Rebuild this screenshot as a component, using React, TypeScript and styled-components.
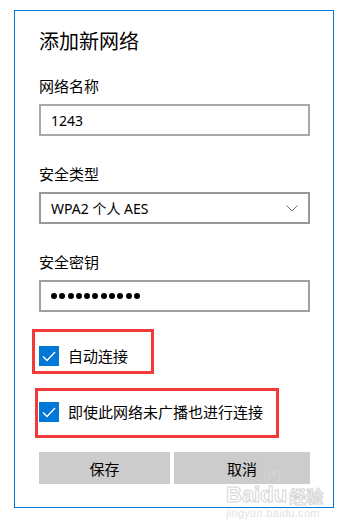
import React from 'react';
import styled, { createGlobalStyle } from 'styled-components';

const GlobalStyle = createGlobalStyle`
body {
  margin: 0;
  background: #fff;
  font-family: "Noto Sans", "Noto Sans CJK SC", sans-serif;
}
`

const Page = styled.div`
position: relative;
width: 345px;
height: 526px;
overflow: hidden;
padding: 10px 0 0 14px;
box-sizing: border-box;
`

const Panel = styled.div`
width: 320px;
border: 1px solid #0078d7;
box-sizing: border-box;
padding: 16px 23px 23px 24px;
display: flex;
flex-direction: column;
`

const Title = styled.div`
font-size: 20px;
line-height: 28px;
color: #000;
font-family: "Noto Sans CJK SC", sans-serif;
`

const Field = styled.div`
display: flex;
flex-direction: column;
gap: 8px;
margin-top: ${(p: { $top: number }) => p.$top}px;
`

const Label = styled.div`
font-size: 15px;
line-height: 20px;
color: #000;
font-family: "Noto Sans CJK SC", sans-serif;
`

const Box = styled.div<{ $border: string }>`
height: 32px;
box-sizing: border-box;
border: 2px solid ${p => p.$border};
display: flex;
align-items: center;
padding: 0 10px;
font-size: 14px;
color: #000;
`

const BoxText = styled.span`
flex: 1;
white-space: nowrap;
`

const Dots = styled.div`
display: flex;
gap: 2.3px;
`

const Dot = styled.span`
width: 6px;
height: 6px;
border-radius: 50%;
background: #000;
`

const Highlight = styled.div<{ $top: number; $left: number; $width: number; $height: number; $padTop: number }>`
margin-top: ${p => p.$top}px;
margin-left: ${p => p.$left}px;
width: ${p => p.$width}px;
height: ${p => p.$height}px;
box-sizing: border-box;
border: 3px solid #f23a3a;
padding-top: ${p => p.$padTop}px;
padding-left: ${p => -p.$left - 3}px;
`

const CheckRow = styled.div`
display: flex;
align-items: center;
gap: 9px;
font-size: 15px;
line-height: 20px;
color: #000;
font-family: "Noto Sans CJK SC", sans-serif;
white-space: nowrap;
`

const CheckBox = styled.span`
width: 20px;
height: 20px;
flex: none;
background: #0078d7;
display: flex;
align-items: center;
justify-content: center;
`

const Buttons = styled.div`
margin-top: 14px;
display: grid;
grid-template-columns: 131px 1fr;
gap: 4px;
`

const Button = styled.div`
height: 32px;
background: #cccccc;
display: flex;
align-items: center;
justify-content: center;
font-size: 15px;
color: #000;
font-family: "Noto Sans CJK SC", sans-serif;
`

const Watermark = styled.div`
position: absolute;
left: 226px;
top: 470px;
display: flex;
flex-direction: column;
align-items: flex-start;
pointer-events: none;
`

const MarkRow = styled.div`
display: flex;
align-items: flex-end;
font-family: "Liberation Sans", sans-serif;
font-weight: bold;
font-size: 22px;
line-height: 22px;
color: rgba(255, 255, 255, 0.7);
-webkit-text-stroke: 1px #d6d6d6;
`

const MarkCjk = styled.span`
font-family: "Noto Sans CJK SC", sans-serif;
font-size: 17px;
line-height: 20px;
margin-left: 2px;
`

const MarkUrl = styled.div`
margin-top: 1px;
font-family: "Liberation Sans", sans-serif;
font-size: 11px;
line-height: 12px;
color: #e2e2e2;
letter-spacing: 0.3px;
`

function Check() {
  return (
    <CheckBox>
      <svg width="14" height="11" viewBox="0 0 14 11">
        <path d="M1 5.5 L5 9.5 L13 1" fill="none" stroke="#fff" strokeWidth="1.5" />
      </svg>
    </CheckBox>
  );
}

function Chevron() {
  return (
    <svg width="12" height="7" viewBox="0 0 12 7">
      <path d="M0.5 0.5 L6 6 L11.5 0.5" fill="none" stroke="#6d6d6d" strokeWidth="1" />
    </svg>
  );
}

function Paw() {
  return (
    <svg width="22" height="16" viewBox="0 0 22 16" style={{ marginBottom: -2 }}>
      <g fill="none" stroke="#d6d6d6" strokeWidth="1">
        <ellipse cx="4" cy="9" rx="2.5" ry="3" />
        <ellipse cx="8.5" cy="4" rx="2.5" ry="3" />
        <ellipse cx="14" cy="4" rx="2.5" ry="3" />
        <ellipse cx="18.5" cy="9" rx="2.5" ry="3" />
      </g>
    </svg>
  );
}

function App() {
  return (
    <Page>
      <GlobalStyle />
      <Panel>
        <Title>添加新网络</Title>

        <Field $top={21}>
          <Label>网络名称</Label>
          <Box $border="#a8a8a8"><BoxText>1243</BoxText></Box>
        </Field>

        <Field $top={28}>
          <Label>安全类型</Label>
          <Box $border="#999999">
            <BoxText>WPA2 个人 AES</BoxText>
            <Chevron />
          </Box>
        </Field>

        <Field $top={28}>
          <Label>安全密钥</Label>
          <Box $border="#a0a0a0">
            <Dots>
              {Array.from({ length: 11 }).map((_, i) => <Dot key={i} />)}
            </Dots>
          </Box>
        </Field>

        <Highlight $top={17} $left={-7} $width={122} $height={45} $padTop={14}>
          <CheckRow><Check />自动连接</CheckRow>
        </Highlight>

        <Highlight $top={14} $left={-4} $width={244} $height={50} $padTop={11}>
          <CheckRow><Check />即使此网络未广播也进行连接</CheckRow>
        </Highlight>

        <Buttons>
          <Button>保存</Button>
          <Button>取消</Button>
        </Buttons>
      </Panel>

      <Watermark>
        <MarkRow>
          Bai
          <span style={{ display: 'flex', flexDirection: 'column', alignItems: 'center' }}>
            <Paw />
            du
          </span>
          <MarkCjk>经验</MarkCjk>
        </MarkRow>
        <MarkUrl>jingyan.baidu.com</MarkUrl>
      </Watermark>
    </Page>
  );
}

export default App;
